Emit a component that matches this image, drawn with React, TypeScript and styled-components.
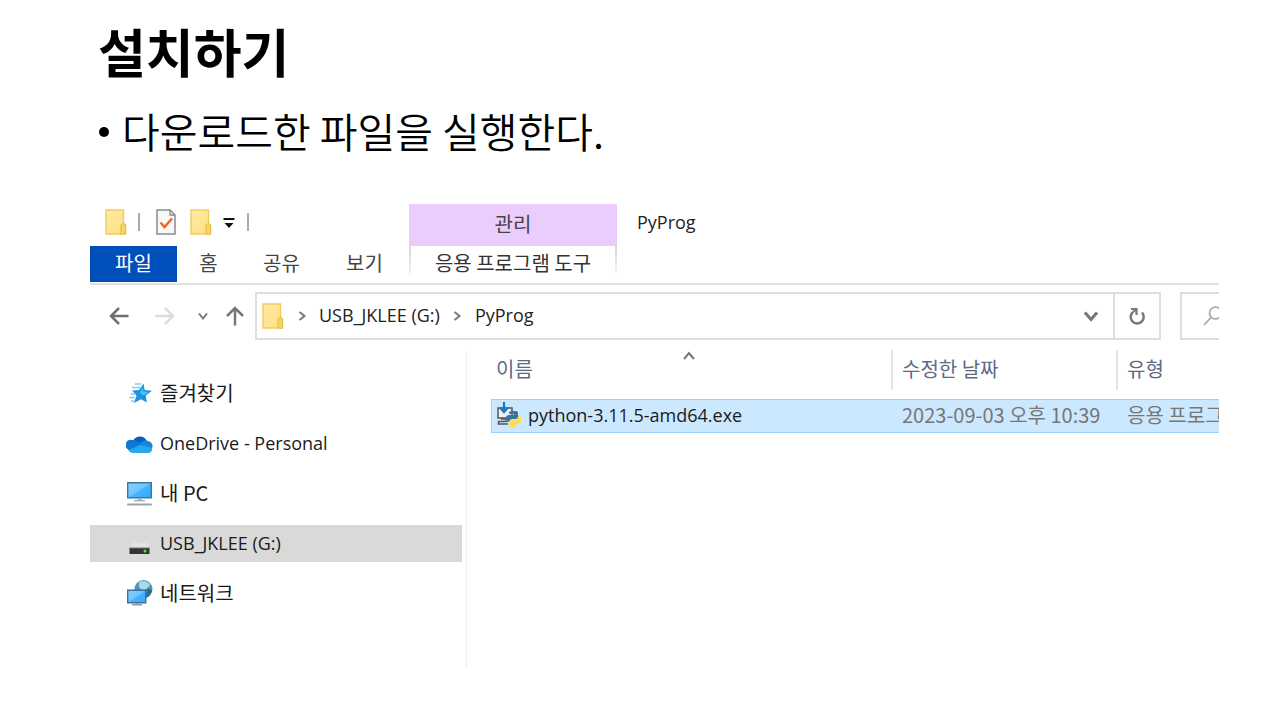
import React from "react";
import styled, { createGlobalStyle, css } from "styled-components";

const GlobalStyle = createGlobalStyle`
  * { box-sizing: border-box; }
  body {
    margin: 0;
    background: #fff;
    color: #000;
    font-family: "Noto Sans CJK KR", "Noto Sans", sans-serif;
  }
  button, input { font: inherit; color: inherit; }
  svg { display: block; flex: none; }
`;

const latinText = css`
  font-family: "Open Sans", "Noto Sans CJK KR", sans-serif;
  font-size: 18px;
`;

const Slide = styled.main`
  padding: 20px 61px 52px 90px;
`;

const Title = styled.h1`
  margin: 0 0 20px;
  padding-left: 8px;
  font-size: 52px;
  line-height: 62px;
  font-weight: 700;
`;

const Points = styled.ul`
  margin: 0 0 46px;
  padding: 0 0 0 8px;
  list-style: none;
`;

const Point = styled.li`
  display: flex;
  align-items: center;
  gap: 13px;
  font-size: 41px;
  line-height: 56px;
  font-weight: 350;

  &::before {
    content: "";
    width: 10px;
    height: 10px;
    margin: 4px 0 0 1px;
    border-radius: 50%;
    background: #000;
  }
`;

const Explorer = styled.section`
  font-size: 20px;
  line-height: 28px;
  color: #222;
  overflow: hidden;
`;

const Ribbon = styled.header`
  display: flex;
  height: 81px;
  border-bottom: 2px solid #e0e0e0;
`;

const RibbonMain = styled.div`
  width: 319px;
`;

const QuickAccess = styled.div`
  display: flex;
  align-items: center;
  height: 42px;
  padding: 0 0 7px 15px;
`;

const IconButton = styled.button<{ $width: number }>`
  display: flex;
  flex: none;
  align-items: center;
  justify-content: center;
  width: ${(p) => p.$width}px;
  padding: 0;
  border: 0;
  background: none;
`;

const Separator = styled.span<{ $before: number; $after: number }>`
  width: 2px;
  height: 18px;
  margin: 0 ${(p) => p.$after}px 0 ${(p) => p.$before}px;
  background: #aaa;
`;

const Tabs = styled.div`
  display: flex;
  height: 36px;
`;

const Tab = styled.button<{ $width: number; $active?: boolean }>`
  width: ${(p) => p.$width}px;
  padding: 0 0 2px;
  border: 0;
  background: ${(p) => (p.$active ? "#0050bc" : "none")};
  color: ${(p) => (p.$active ? "#fff" : "#444")};
`;

const ToolGroup = styled.div`
  width: 208px;
`;

const ToolGroupTitle = styled.div`
  height: 42px;
  line-height: 40px;
  background: #eaccfd;
  color: #444;
  text-align: center;
`;

const ToolTab = styled.button`
  width: 100%;
  height: 28px;
  padding: 3px 0 0;
  border: 2px solid;
  border-width: 0 2px;
  border-image: linear-gradient(#d4d4d4, #f4f4f4) 1;
  background: none;
  color: #333;
  line-height: 28px;
`;

const WindowTitle = styled.h2`
  ${latinText}
  margin: 0;
  padding-left: 20px;
  line-height: 36px;
  font-weight: 400;
`;

const NavBar = styled.div`
  display: flex;
  align-items: stretch;
  height: 48px;
  margin: 7px 0 10px;
`;

const History = styled.div`
  display: flex;
  gap: 18px;
  width: 165px;
  padding-left: 16px;
`;

const AddressBar = styled.nav`
  display: flex;
  flex: 1;
  align-items: center;
  padding-left: 5px;
  border: 2px solid #dedede;
`;

const Crumb = styled.a`
  ${latinText}
  padding-bottom: 2px;
  color: inherit;
  text-decoration: none;
`;

const CrumbArrow = styled.span`
  display: flex;
  justify-content: center;
  width: 35px;
`;

const AddressTools = styled.div`
  display: flex;
  align-self: stretch;
  margin-left: auto;
`;

const Refresh = styled(IconButton)`
  border-left: 2px solid #dedede;
`;

const SearchBox = styled.label`
  display: flex;
  align-items: center;
  gap: 8px;
  width: 39px;
  margin-left: 19px;
  padding-left: 21px;
  border: 2px solid #dedede;
  border-right: 0;
  overflow: hidden;
`;

const SearchInput = styled.input`
  width: 160px;
  flex: none;
  border: 0;
  outline: 0;
  background: none;
`;

const Content = styled.div`
  display: flex;
  min-height: 318px;
`;

const Sidebar = styled.ul`
  display: flex;
  flex-direction: column;
  gap: 13px;
  width: 377px;
  margin: 0;
  padding: 25px 4px 0 0;
  border-right: 1px solid #eee;
  list-style: none;
`;

const Place = styled.a<{ $selected?: boolean; $latin?: boolean }>`
  display: flex;
  align-items: center;
  gap: 7px;
  height: 37px;
  padding: 0 0 2px 36px;
  color: #1a1a1a;
  text-decoration: none;
  ${(p) => p.$latin && latinText}
  ${(p) => p.$selected && css`background: #d9d9d9;`}
`;

const Files = styled.div`
  flex: 1;
  min-width: 0;
  padding-left: 24px;
`;

const Table = styled.table`
  width: 100%;
  table-layout: fixed;
  border-collapse: separate;
  border-spacing: 0;
  white-space: nowrap;
`;

const HeadCell = styled.th<{ $width?: number }>`
  width: ${(p) => (p.$width ? `${p.$width}px` : "auto")};
  padding: 0 0 9px;
  font-weight: 400;
  text-align: left;
  color: #5c6b84;
`;

const HeadLabel = styled.div<{ $divided?: boolean }>`
  display: flex;
  height: 40px;
  padding-left: ${(p) => (p.$divided ? 9 : 5)}px;
  border-left: ${(p) => (p.$divided ? "2px solid #e5e5e5" : "0")};
  line-height: 38px;
`;

const SortMark = styled.span`
  flex: 1;
  padding-left: 150px;
`;

const Cell = styled.td<{ $first?: boolean }>`
  height: 34px;
  padding: 0 0 2px ${(p) => (p.$first ? 4 : 11)}px;
  overflow: hidden;
  border: solid #99d1ff;
  border-width: 1px 0 1px ${(p) => (p.$first ? 1 : 0)}px;
  background: #cce8ff;
  color: #777;
  line-height: 28px;
`;

const FileName = styled.span`
  ${latinText}
  display: flex;
  align-items: center;
  gap: 7px;
  color: #1a1a1a;
`;

const FolderIcon = () => (
  <svg width="22" height="26" viewBox="0 0 22 26" aria-hidden="true">
    <defs>
      <linearGradient id="folder" x1="0" y1="0" x2="1" y2="1">
        <stop offset="0" stopColor="#ffeba6" />
        <stop offset="1" stopColor="#ffdf80" />
      </linearGradient>
    </defs>
    <path d="M1 1h17.500v14l2 1v9H1z" fill="url(#folder)" stroke="#f0cd5c" strokeWidth="1.400" />
    <path d="M16 25v-8.500l1-1.500h2.500l1 1.500V25z" fill="#f8d568" stroke="#e6bf48" strokeWidth="1.200" />
  </svg>
);

const CheckPageIcon = () => (
  <svg width="20" height="26" viewBox="0 0 20 26" fill="none" aria-hidden="true">
    <path d="M1 1h13l5 5v19H1z" fill="#f8f8f8" stroke="#8b8b8b" strokeWidth="1.500" />
    <path d="M14 1v5h5" stroke="#8b8b8b" strokeWidth="1.300" />
    <path d="M4.500 13.500l4 4.500 7.500-8.500" stroke="#f06529" strokeWidth="2.500" />
  </svg>
);

const CustomizeIcon = () => (
  <svg width="12" height="12" viewBox="0 0 12 12" aria-hidden="true">
    <path d="M0.500 2h11v2h-11zM1.500 7h9l-4.500 5z" fill="#111" />
  </svg>
);

const ArrowIcon = ({ dir, color }: { dir: "left" | "right" | "up"; color: string }) => (
  <svg
    width="20" height="20" viewBox="0 0 20 20" fill="none" stroke={color} strokeWidth="2.500"
    transform={`rotate(${{ left: 0, up: 90, right: 180 }[dir]})`} aria-hidden="true"
  >
    <path d="M19.500 10H2M10 2L2 10l8 8" />
  </svg>
);

const ChevronIcon = ({ dir, size, color = "#777", weight = 2 }: {
  dir: "down" | "up" | "right"; size: number; color?: string; weight?: number;
}) => (
  <svg
    width={size} height={size} viewBox={`0 0 ${size} ${size}`} fill="none" stroke={color}
    strokeWidth={weight} aria-hidden="true"
  >
    <path
      transform={`rotate(${{ down: 0, up: 180, right: -90 }[dir]} ${size / 2} ${size / 2})`}
      d={`M1 ${size / 4}L${size / 2} ${size * 0.75}L${size - 1} ${size / 4}`}
    />
  </svg>
);

const RefreshIcon = () => (
  <svg width="18" height="20" viewBox="0 0 18 20" fill="none" stroke="#787878" aria-hidden="true">
    <path d="M14 6.500A6.500 6.500 0 1 1 4 7" strokeWidth="2.500" />
    <path d="M3 3h5.500v6" strokeWidth="2.200" />
    <path d="M3.500 7.500L8 3.500" strokeWidth="2" />
  </svg>
);

const SearchIcon = () => (
  <svg width="20" height="20" viewBox="0 0 20 20" fill="none" stroke="#a3a3ad" strokeWidth="1.600" aria-hidden="true">
    <circle cx="12.500" cy="7" r="6" />
    <path d="M8 11.500L1 19" />
  </svg>
);

const StarIcon = () => (
  <svg width="27" height="26" viewBox="0 0 27 26" aria-hidden="true">
    <path d="M17.500 3.500l1.200 6.500 7.300.8-6.200 4.700 1 7-5.800-3.300-7 3.800 2.500-7.500L6 10.500l7 -.5z" fill="#1b95df" />
    <path d="M16.500 6.500l1 5 5 .5-4.500 3.500-4-2z" fill="#4dbdf5" />
    <path d="M9 4h6M6 7.500h8M4.500 14h5M3.500 17.500h5M5 21h3.500" stroke="#86c6ef" strokeWidth="1.400" />
  </svg>
);

const CloudIcon = () => (
  <svg width="27" height="26" viewBox="0 0 27 26" aria-hidden="true">
    <path d="M7.500 10A7.500 7.500 0 0 1 20.500 10.500L13 18 6 17z" fill="#0a5fb8" />
    <path d="M2 19.500A5.300 5.300 0 0 1 6.500 10c3 0 4.500 1 6.500 2.300L20 17l-8 5H6.500A5.300 5.300 0 0 1 2 19.500z" fill="#0f78d4" />
    <path d="M13 14.500c2-3 6-5 9-3.500A5 5 0 0 1 25.500 19z" fill="#1786dc" />
    <path d="M2.500 20l11.500-5 12 3a4 4 0 0 1-4 5H6.500a5 5 0 0 1-4-3z" fill="#28a8ea" />
  </svg>
);

const MonitorIcon = () => (
  <svg width="27" height="26" viewBox="0 0 27 26" aria-hidden="true">
    <defs>
      <linearGradient id="screen" x1="0" y1="0" x2="1" y2="1">
        <stop offset="0" stopColor="#8ad0ff" />
        <stop offset="0.500" stopColor="#6cc4ff" />
        <stop offset="0.520" stopColor="#48b4ff" />
        <stop offset="1" stopColor="#31a8fb" />
      </linearGradient>
    </defs>
    <path d="M1.700 2.700h23.600v15H1.700z" fill="url(#screen)" stroke="#41769b" strokeWidth="1.400" />
    <path d="M11 18.500h5v1.500h3v1.500H8V20h3z" fill="#a5b5c2" />
    <path d="M2 24.500h23" stroke="#93a5b4" strokeWidth="2" strokeLinecap="round" />
  </svg>
);

const DriveIcon = () => (
  <svg width="27" height="26" viewBox="0 0 27 26" aria-hidden="true">
    <path d="M6.500 12.500h14l3 5.500h-20z" fill="#e2e2e2" />
    <path d="M3.500 18h20v6h-20z" fill="#333" />
    <path d="M3.500 18h20" stroke="#777" />
    <circle cx="19" cy="21" r="1.500" fill="#3ff03f" />
  </svg>
);

const NetworkIcon = () => (
  <svg width="27" height="26" viewBox="0 0 27 26" aria-hidden="true">
    <circle cx="17.500" cy="9" r="9" fill="#4b97b9" />
    <path d="M13 2c4-2 9-1 11 3l-3 4-5 1-3-3z" fill="#a9d9e6" />
    <path d="M21 8l5 2c-.5 4-3 7-6 8z" fill="#286d92" />
    <path d="M1.700 10.200h18v12.500h-18z" fill="url(#screen)" stroke="#3a7299" strokeWidth="1.400" />
    <path d="M9 23h4v1h3v1.500H6V24h3z" fill="#8a9daa" />
  </svg>
);

const PythonInstallerIcon = () => (
  <svg width="25" height="26" viewBox="0 0 25 26" fill="none" aria-hidden="true">
    <path d="M2 6h14v10H2z" fill="#edf0f2" stroke="#555" strokeWidth="1.500" />
    <path d="M5 17h6l-1 2.500H2.500v2.500H12" stroke="#555" strokeWidth="1.500" />
    <path d="M15 9h5q2 0 2 2v4q0 2-2 2h-4q-2 0-2 3h-2q-2-1-2-4t3-3h5v-1h-5q0-3 2-3z" fill="#3973a5" />
    <path d="M22 13h1q2 1 2 5t-3 4h-2v2q-1 1.500-4 1.500t-3-2.500v-3q0-2 2-2h4q3 0 3-3z" fill="#ffdc50" />
    <path d="M8 0v9M4 5.500L8 10l4-4.500" stroke="#1479be" strokeWidth="2.200" />
  </svg>
);

const places = [
  { name: "즐겨찾기", Icon: StarIcon },
  { name: "OneDrive - Personal", Icon: CloudIcon, latin: true },
  { name: "내 PC", Icon: MonitorIcon },
  { name: "USB_JKLEE (G:)", Icon: DriveIcon, latin: true, selected: true },
  { name: "네트워크", Icon: NetworkIcon },
];

export default function App() {
  return (
    <Slide>
      <GlobalStyle />
      <Title>설치하기</Title>
      <Points>
        <Point>다운로드한 파일을 실행한다.</Point>
      </Points>
      <Explorer>
        <Ribbon>
          <RibbonMain>
            <QuickAccess>
              <FolderIcon />
              <Separator $before={11} $after={16} />
              <IconButton $width={20} aria-label="속성"><CheckPageIcon /></IconButton>
              <IconButton $width={50} aria-label="새 폴더"><FolderIcon /></IconButton>
              <IconButton $width={6} aria-label="사용자 지정"><CustomizeIcon /></IconButton>
              <Separator $before={15} $after={0} />
            </QuickAccess>
            <Tabs>
              <Tab $width={87} $active>파일</Tab>
              <Tab $width={63}>홈</Tab>
              <Tab $width={83}>공유</Tab>
              <Tab $width={83}>보기</Tab>
            </Tabs>
          </RibbonMain>
          <ToolGroup>
            <ToolGroupTitle>관리</ToolGroupTitle>
            <ToolTab>응용 프로그램 도구</ToolTab>
          </ToolGroup>
          <WindowTitle>PyProg</WindowTitle>
        </Ribbon>
        <NavBar>
          <History>
            <IconButton $width={26} aria-label="뒤로"><ArrowIcon dir="left" color="#707070" /></IconButton>
            <IconButton $width={30} aria-label="앞으로"><ArrowIcon dir="right" color="#dcdcdc" /></IconButton>
            <IconButton $width={10} aria-label="최근 위치"><ChevronIcon dir="down" size={10} weight={2} /></IconButton>
            <IconButton $width={18} aria-label="위로"><ArrowIcon dir="up" color="#777" /></IconButton>
          </History>
          <AddressBar aria-label="주소">
            <FolderIcon />
            <CrumbArrow><ChevronIcon dir="right" size={10} weight={2} /></CrumbArrow>
            <Crumb href="#drive">USB_JKLEE (G:)</Crumb>
            <CrumbArrow><ChevronIcon dir="right" size={10} weight={2} /></CrumbArrow>
            <Crumb href="#folder">PyProg</Crumb>
            <AddressTools>
              <IconButton $width={44} aria-label="이전 위치"><ChevronIcon dir="down" size={14} weight={3} /></IconButton>
              <Refresh $width={46} aria-label="새로 고침"><RefreshIcon /></Refresh>
            </AddressTools>
          </AddressBar>
          <SearchBox>
            <SearchIcon />
            <SearchInput type="search" aria-label="검색" />
          </SearchBox>
        </NavBar>
        <Content>
          <Sidebar>
            {places.map(({ name, Icon, latin, selected }) => (
              <li key={name}>
                <Place href="#place" $latin={latin} $selected={selected}>
                  <Icon />
                  {name}
                </Place>
              </li>
            ))}
          </Sidebar>
          <Files>
            <Table>
              <thead>
                <tr>
                  <HeadCell>
                    <HeadLabel>
                      이름
                      <SortMark><ChevronIcon dir="up" size={12} /></SortMark>
                    </HeadLabel>
                  </HeadCell>
                  <HeadCell $width={225}><HeadLabel $divided>수정한 날짜</HeadLabel></HeadCell>
                  <HeadCell $width={103}><HeadLabel $divided>유형</HeadLabel></HeadCell>
                </tr>
              </thead>
              <tbody>
                <tr>
                  <Cell $first>
                    <FileName>
                      <PythonInstallerIcon />
                      python-3.11.5-amd64.exe
                    </FileName>
                  </Cell>
                  <Cell>2023-09-03 오후 10:39</Cell>
                  <Cell>응용 프로그램</Cell>
                </tr>
              </tbody>
            </Table>
          </Files>
        </Content>
      </Explorer>
    </Slide>
  );
}
